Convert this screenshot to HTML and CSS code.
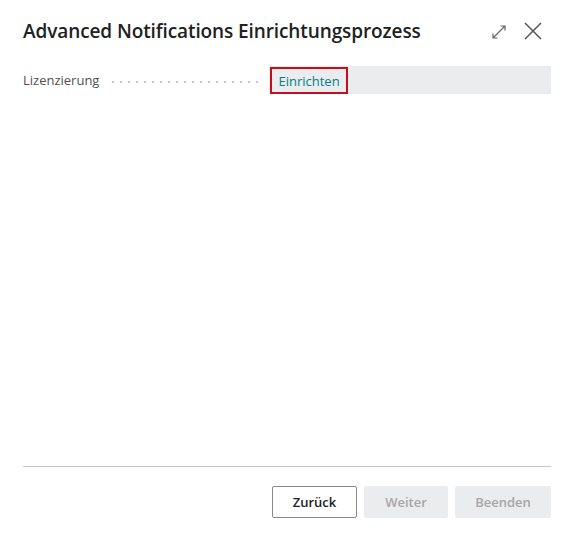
FILE: index.html
```html
<!DOCTYPE html>
<html lang="de">
<head>
<meta charset="utf-8">
<link rel="stylesheet" href="styles.css">
</head>
<body>
<div class="dialog">
  <header class="head">
    <h1 class="title">Advanced Notifications Einrichtungsprozess</h1>
    <div class="tools">
      <svg class="icon expand" width="16" height="16" viewBox="0 0 16 16"><path d="M2 14 L14 2 M9.5 2 H14 V6.5 M2 9.5 V14 H6.5" fill="none" stroke="#666" stroke-width="1.2"/></svg>
      <svg class="icon close" width="18" height="18" viewBox="0 0 18 18"><path d="M1 1 L17 17 M17 1 L1 17" fill="none" stroke="#555" stroke-width="1.5"/></svg>
    </div>
  </header>
  <div class="field">
    <span class="label">Lizenzierung</span>
    <span class="dots"></span>
    <div class="value"><span class="link">Einrichten</span></div>
  </div>
  <div class="spacer"></div>
  <footer class="foot">
    <button class="btn primary">Zurück</button>
    <button class="btn disabled w1">Weiter</button>
    <button class="btn disabled w2">Beenden</button>
  </footer>
</div>
</body>
</html>
```
FILE: styles.css
```css
html, body { margin: 0; padding: 0; background: #fff; }
body { font-family: "Segoe UI", "Open Sans", sans-serif; color: #212121; }
.dialog { width: 574px; height: 541px; box-sizing: border-box; padding: 0 23px 23px 23px; display: flex; flex-direction: column; }
.head { display: flex; align-items: center; height: 62px; }
.title { margin: 0; font-size: 19px; font-weight: 600; color: #212121; flex: 1; letter-spacing: -0.1px; }
.tools { display: flex; align-items: center; gap: 17px; margin-right: 9px; }
.icon { display: block; }
.expand { margin-top: 1px; }
.field { display: flex; align-items: center; height: 28px; margin-top: 4px; }
.label { font-size: 13px; color: #505050; }
.dots { flex: 0 0 auto; width: 155px; margin: 4px 5px 0 10px; height: 2px; background-image: radial-gradient(circle, #c8c8c8 0.8px, transparent 1.2px); background-size: 8px 2px; }
.value { flex: 1; background: #ebecee; height: 28px; display: flex; align-items: stretch; }
.link { border: 2px solid #c50f1f; box-sizing: border-box; margin: 1px 0 0 1px; padding: 0 6px; font-size: 13px; color: #00808a; display: flex; align-items: center; }
.spacer { flex: 1; border-bottom: 1px solid #c8c8c8; }
.foot { display: flex; justify-content: flex-end; gap: 7px; padding-top: 19px; }
.btn { font-family: inherit; font-size: 13px; font-weight: 600; height: 32px; border-radius: 2px; }
.primary { width: 85px; background: #fff; border: 1px solid #8a8886; color: #212121; }
.disabled { background: #ebecee; border: 1px solid #ebecee; color: #a6a6a6; }
.w1 { width: 84px; }
.w2 { width: 96px; }
```
